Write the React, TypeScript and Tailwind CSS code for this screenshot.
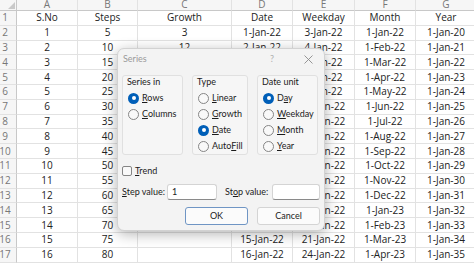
import React from "react";

const MONTHS = ["Jan", "Feb", "Mar", "Apr", "May", "Jun", "Jul", "Aug", "Sep", "Oct", "Nov", "Dec"];
const WEEKDAYS = [3, 4, 5, 6, 7, 10, 11, 12, 13, 14, 17, 18, 19, 20, 21, 24];
const GROWTH = ["3", "12", "48", "192", "768"];

const rows: string[][] = [
  ["S.No", "Steps", "Growth", "Date", "Weekday", "Month", "Year"],
  ...Array.from({ length: 16 }, (_, i) => [
    String(i + 1),
    String((i + 1) * 5),
    GROWTH[i] ?? "",
    `${i + 1}-Jan-22`,
    `${WEEKDAYS[i]}-Jan-22`,
    `1-${MONTHS[i % 12]}-${22 + Math.floor(i / 12)}`,
    `1-Jan-${20 + i}`,
  ]),
];

const letters = ["A", "B", "C", "D", "E", "F", "G"];

function Sheet() {
  return (
    <div className="grid grid-cols-[17px_61px_60px_94px_61px_62px_61px_61px] font-['Open_Sans',sans-serif] text-[10px]">
      {/* column headers */}
      <div className="relative h-[11px] border-b border-r border-[#c8c8c8] bg-[#f6f6f6]">
        <div className="absolute bottom-[1px] right-[1px] h-0 w-0 border-b-[7px] border-l-[7px] border-b-[#c9c9c9] border-l-transparent" />
      </div>
      {letters.map((l) => (
        <div
          key={l}
          className="flex h-[11px] justify-center overflow-hidden border-b border-r border-b-[#c8c8c8] border-r-[#e2e2e2] bg-[#f6f6f6] leading-[10px] text-[#777]"
        >
          <span className="-mt-[1px]">{l}</span>
        </div>
      ))}

      {rows.map((r, ri) => (
        <React.Fragment key={ri}>
          <div className="flex h-[14.8px] items-center justify-center border-b border-r border-b-[#e2e2e2] border-r-[#c8c8c8] bg-[#f6f6f6] pr-[6px] text-[#777]">
            {ri + 1}
          </div>
          {r.map((c, ci) => (
            <div
              key={ci}
              className="flex h-[14.8px] items-center justify-center whitespace-nowrap border-b border-r border-[#e2e2e2] text-[#222]"
            >
              {c}
            </div>
          ))}
        </React.Fragment>
      ))}
    </div>
  );
}

function Radio({ on }: { on?: boolean }) {
  return on ? (
    <span className="flex h-[11px] w-[11px] items-center justify-center rounded-full bg-[#005fb8]">
      <span className="h-[4px] w-[4px] rounded-full bg-white" />
    </span>
  ) : (
    <span className="h-[11px] w-[11px] rounded-full border border-[#858585] bg-[#f9f9f9]" />
  );
}

type Opt = { pre: string; key: string; post: string; on?: boolean };

function Group({ title, width, opts }: { title: string; width: string; opts: Opt[] }) {
  return (
    <div className={`h-[80px] ${width} rounded-[3px] border border-[#e0e0e0] bg-[#f6f6f6]`}>
      <div className="pl-[4px] leading-[11px]">{title}</div>
      <div className="mt-[3px] flex flex-col">
        {opts.map((o) => (
          <div key={o.pre + o.key + o.post} className="flex h-[16px] items-center gap-[3px] pl-[5px]">
            <Radio on={o.on} />
            <span>
              {o.pre}
              <span className="underline underline-offset-1">{o.key}</span>
              {o.post}
            </span>
          </div>
        ))}
      </div>
    </div>
  );
}

function SeriesDialog() {
  return (
    <div className="absolute left-[117px] top-[48px] flex w-[208px] flex-col rounded-[7px] border border-[#d2d2d2] bg-[#f3f3f3] pb-[5px] font-['Lato',sans-serif] text-[9px] text-[#1b1b1b] shadow-[0_3px_14px_rgba(0,0,0,0.3)]">
      <div className="flex h-[20px] items-center pl-[5px] text-[#9a9a9a]">
        <span className="flex-1">Series</span>
        <span className="w-[40px] text-center text-[#b0b0b0]">?</span>
        <span className="flex w-[32px] justify-center">
          <svg width="9" height="9" viewBox="0 0 9 9" fill="none" stroke="#8a8a8a" strokeWidth="0.9">
            <path d="M0.5 0.5 L8.5 8.5 M8.5 0.5 L0.5 8.5" />
          </svg>
        </span>
      </div>

      <div className="mt-[6px] flex flex-col px-[4px]">
        <div className="flex gap-[9px]">
          <Group
            title="Series in"
            width="w-[61px]"
            opts={[
              { pre: "", key: "R", post: "ows", on: true },
              { pre: "", key: "C", post: "olumns" },
            ]}
          />
          <Group
            title="Type"
            width="w-[56px]"
            opts={[
              { pre: "", key: "L", post: "inear" },
              { pre: "", key: "G", post: "rowth" },
              { pre: "", key: "D", post: "ate", on: true },
              { pre: "Auto", key: "F", post: "ill" },
            ]}
          />
          <Group
            title="Date unit"
            width="w-[61px]"
            opts={[
              { pre: "D", key: "a", post: "y", on: true },
              { pre: "", key: "W", post: "eekday" },
              { pre: "", key: "M", post: "onth" },
              { pre: "", key: "Y", post: "ear" },
            ]}
          />
        </div>

        <div className="mt-[10px] flex h-[12px] items-center gap-[3px]">
          <span className="h-[10px] w-[10px] rounded-[2px] border border-[#858585] bg-[#f9f9f9]" />
          <span>
            <span className="underline underline-offset-1">T</span>rend
          </span>
        </div>

        <div className="mt-[7px] flex h-[16px] items-center">
          <span className="w-[45px]">
            <span className="underline underline-offset-1">S</span>tep value:
          </span>
          <div className="flex h-[16px] w-[50px] items-center rounded-[3px] border border-[#d4d4d4] border-b-[#8a8a8a] bg-white pl-[4px]">
            1
          </div>
          <span className="ml-[8px] w-[47px]">
            St<span className="underline underline-offset-1">o</span>p value:
          </span>
          <div className="h-[16px] w-[48px] rounded-[3px] border border-[#d4d4d4] border-b-[#8a8a8a] bg-white" />
        </div>

        <div className="mt-[7px] flex justify-end gap-[9px]">
          <div className="flex h-[18px] w-[63px] items-center justify-center rounded-[3px] border border-[#6f95c4] bg-[#fbfbfb]">
            OK
          </div>
          <div className="flex h-[18px] w-[63px] items-center justify-center rounded-[3px] border border-[#d4d4d4] bg-[#fbfbfb]">
            Cancel
          </div>
        </div>
      </div>
    </div>
  );
}

export default function App() {
  return (
    <div className="relative h-[266px] w-[474px] overflow-hidden bg-white">
      <Sheet />
      <SeriesDialog />
    </div>
  );
}
